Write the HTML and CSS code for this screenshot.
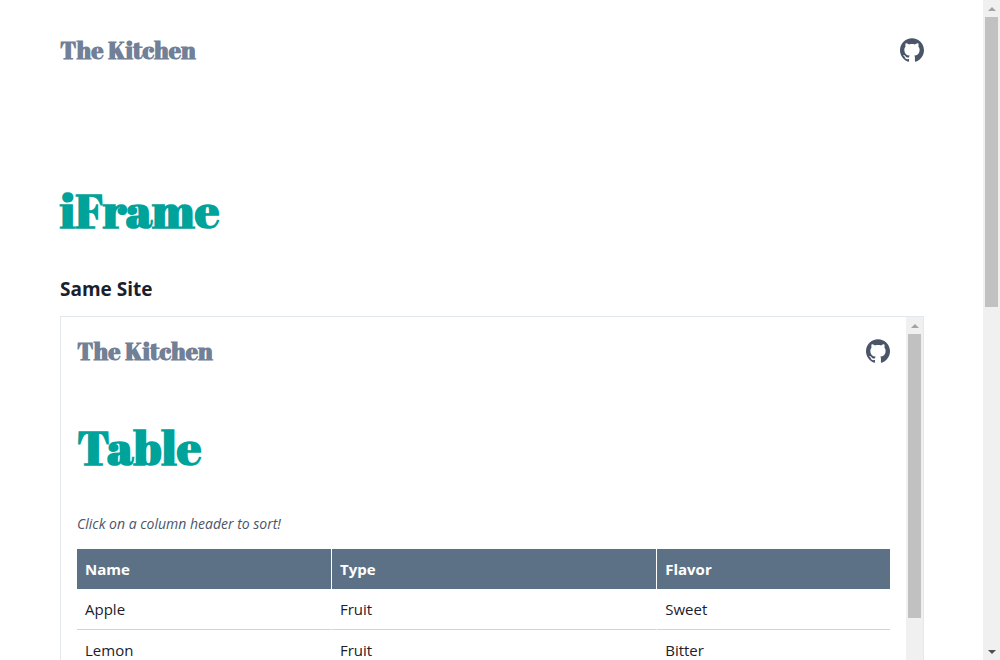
FILE: index.html
```html
<!DOCTYPE html>
<html lang="en">
<head>
<meta charset="utf-8">
<title>The Kitchen</title>
<link rel="stylesheet" href="styles.css">
</head>
<body>
<svg class="sprite" aria-hidden="true">
  <symbol id="github" viewBox="0 0 24 24">
    <path d="M12 .297c-6.63 0-12 5.373-12 12 0 5.303 3.438 9.8 8.205 11.385.6.113.82-.258.82-.577 0-.285-.01-1.04-.015-2.04-3.338.724-4.042-1.61-4.042-1.61C4.422 18.07 3.633 17.7 3.633 17.7c-1.087-.744.084-.729.084-.729 1.205.084 1.838 1.236 1.838 1.236 1.07 1.835 2.809 1.305 3.495.998.108-.776.417-1.305.76-1.605-2.665-.3-5.466-1.332-5.466-5.93 0-1.31.465-2.38 1.235-3.22-.135-.303-.54-1.523.105-3.176 0 0 1.005-.322 3.3 1.23.96-.267 1.98-.399 3-.405 1.02.006 2.04.138 3 .405 2.28-1.552 3.285-1.23 3.285-1.23.645 1.653.24 2.873.12 3.176.765.84 1.23 1.91 1.23 3.22 0 4.61-2.805 5.625-5.475 5.92.42.36.81 1.096.81 2.22 0 1.606-.015 2.896-.015 3.286 0 .315.21.69.825.57C20.565 22.092 24 17.592 24 12.297c0-6.627-5.373-12-12-12"/>
  </symbol>
</svg>
<div class="window">
  <div class="page">
    <header class="site-header">
      <a class="brand" href="#">The Kitchen</a>
      <a class="repo" href="#" aria-label="GitHub"><svg><use href="#github"/></svg></a>
    </header>
    <main>
      <h1 class="title title-page">iFrame</h1>
      <h2 class="subtitle">Same Site</h2>
      <section class="frame">
        <div class="frame-content">
          <header class="site-header">
            <a class="brand" href="#">The Kitchen</a>
            <a class="repo" href="#" aria-label="GitHub"><svg><use href="#github"/></svg></a>
          </header>
          <h1 class="title title-frame">Table</h1>
          <p class="hint">Click on a column header to sort!</p>
          <table class="foods">
            <colgroup><col class="col-name"><col class="col-type"><col></colgroup>
            <thead><tr><th scope="col">Name</th><th scope="col">Type</th><th scope="col">Flavor</th></tr></thead>
            <tbody>
              <tr><td>Apple</td><td>Fruit</td><td>Sweet</td></tr>
              <tr><td>Lemon</td><td>Fruit</td><td>Bitter</td></tr>
            </tbody>
          </table>
        </div>
        <div class="scrollbar scrollbar-frame" aria-hidden="true">
          <span class="arrow arrow-up"></span>
          <span class="thumb"></span>
        </div>
      </section>
    </main>
  </div>
  <div class="scrollbar" aria-hidden="true">
    <span class="arrow arrow-up"></span>
    <span class="track"><span class="thumb"></span></span>
    <span class="arrow arrow-down"></span>
  </div>
</div>
</body>
</html>
```
FILE: styles.css
```css
* { box-sizing: border-box; }

body {
  margin: 0;
  background: #fff;
  color: #1a202c;
  font: 15px/24px "Open Sans", "Noto Sans", sans-serif;
}

.sprite { display: none; }

.window {
  display: flex;
  height: 100vh;
  overflow: hidden;
}

.page {
  flex: 1;
  min-width: 0;
  padding: 32px 59px 0 60px;
}

.site-header {
  display: flex;
  align-items: center;
  justify-content: space-between;
  height: 36px;
}

.brand,
.title {
  font-family: "Abril Fatface", "Liberation Serif", serif;
  font-weight: bold;
}

.brand {
  color: #718096;
  font-size: 24px;
  line-height: 36px;
  text-decoration: none;
}

.repo {
  display: block;
  height: 24px;
  color: #4a5568;
}

.repo svg {
  display: block;
  width: 24px;
  height: 24px;
  fill: currentColor;
}

.title {
  margin: 0;
  color: #00a399;
  font-size: 48px;
  line-height: 60px;
}

.title-page { padding-top: 112px; }
.title-frame { padding-top: 48px; }

.subtitle {
  margin: 35px 0 13px;
  font-size: 19px;
  line-height: 28px;
  font-weight: 700;
}

.frame {
  display: flex;
  border: 1px solid #e2e8f0;
}

.frame-content {
  flex: 1;
  min-width: 0;
  min-height: 600px;
  padding: 16px;
}

.hint {
  margin: 35px 0 13px;
  color: #4a5568;
  font-size: 14px;
  font-style: italic;
}

.foods {
  width: 100%;
  table-layout: fixed;
  border-spacing: 0;
}

.col-name { width: 255px; }
.col-type { width: 40%; }

.foods th,
.foods td {
  padding: 8px;
  border-right: 1px solid #fff;
  text-align: left;
}

.foods th {
  background: #5d7186;
  color: #fff;
  font-weight: 700;
}

.foods td { border-bottom: 1px solid #cfd5db; }

.foods th:last-child,
.foods td:last-child { border-right: 0; }

.scrollbar {
  display: flex;
  flex-direction: column;
  flex: none;
  width: 17px;
  background: #f0f0f0;
}

.track { flex: 1; }

.thumb {
  display: block;
  height: 290px;
  margin: 0 2px;
  background: #c1c1c1;
}

.scrollbar-frame .thumb { height: 284px; }

.arrow {
  display: flex;
  align-items: center;
  justify-content: center;
  height: 17px;
}

.arrow::before {
  content: "";
  border: 4px solid transparent;
}

.arrow-up::before {
  border-top: 0;
  border-bottom-color: #a3a3a3;
}

.arrow-down::before {
  border-bottom: 0;
  border-top-color: #505050;
}
```
